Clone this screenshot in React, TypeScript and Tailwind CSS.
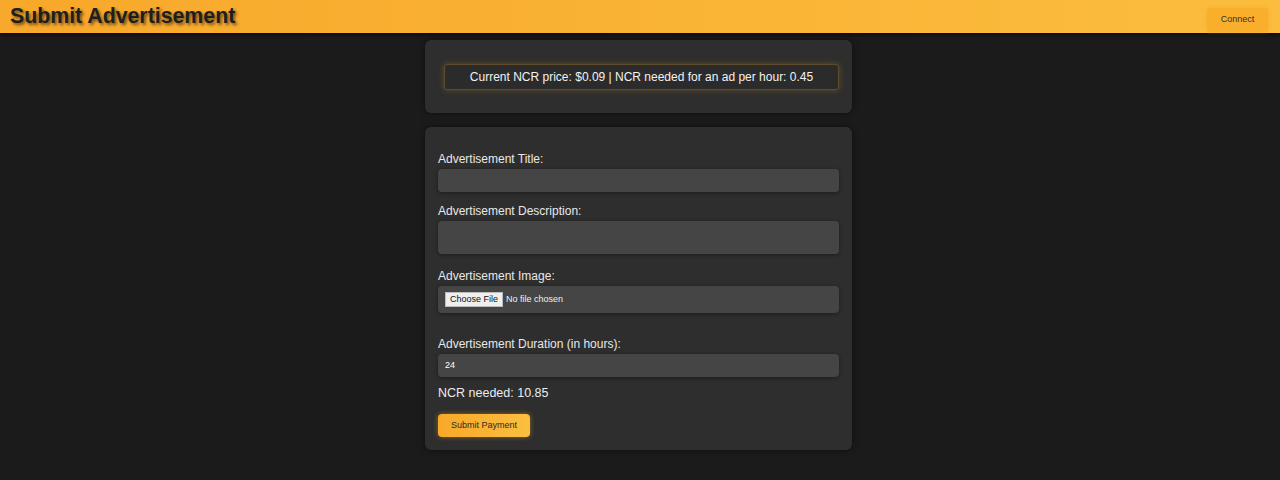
export default function App() {
  return (
    <div className="min-h-screen bg-[#1b1b1b] font-['Liberation_Sans',Arial,sans-serif] text-[#e8e8e8]">
      {/* header */}
      <header className="flex h-[33px] items-center justify-between bg-gradient-to-r from-[#f8a82a] to-[#fbbd3e] pl-[10px] pr-[12px] shadow-[0_2px_4px_rgba(0,0,0,0.6)]">
        <h1 className="text-[21.3px] font-bold leading-none text-[#1e1e1e] [text-shadow:2px_2px_3px_rgba(0,0,0,0.55)]">
          Submit Advertisement
        </h1>
        <button className="mt-[7px] h-[24px] w-[61px] rounded-[3px] bg-[#f9ae2c] text-[9px] text-[#333] shadow-[0_0_4px_rgba(240,150,20,0.4)]">
          Connect
        </button>
      </header>

      <main className="mx-auto flex w-[430px] flex-col gap-[14px] pr-[3px] pt-[7px]">
        <div className="rounded-[6px] bg-[#2e2e2e] pb-[23px] pl-[19px] pr-[13px] pt-[24px] shadow-[0_0_6px_rgba(0,0,0,0.5)]">
          <div className="flex h-[26px] items-center justify-center rounded-[3px] border border-[#5e4c2c] bg-[#2b2b2b] text-[12px] text-[#f2f2f2] shadow-[0_0_6px_rgba(200,140,40,0.35)]">
            Current NCR price: $0.09 | NCR needed for an ad per hour: 0.45
          </div>
        </div>

        <form className="flex flex-col rounded-[6px] bg-[#2e2e2e] px-[13px] pb-[13px] pt-[25px] shadow-[0_0_6px_rgba(0,0,0,0.5)]">
          <label className="text-[12px] leading-[14px] text-[#e8e8e8]">Advertisement Title:</label>
          <input
            type="text"
            className="mt-[3px] h-[23px] w-full rounded-[4px] bg-[#454545] px-[7px] text-[9px] text-white shadow-[0_1px_4px_rgba(0,0,0,0.4)] outline-none"
          />

          <label className="mt-[12px] text-[12px] leading-[14px] text-[#e8e8e8]">Advertisement Description:</label>
          <div className="mt-[3px] h-[33px] w-full rounded-[4px] bg-[#454545] shadow-[0_1px_4px_rgba(0,0,0,0.4)]" />

          <label className="mt-[15px] text-[12px] leading-[14px] text-[#e8e8e8]">Advertisement Image:</label>
          <div className="mt-[3px] flex h-[27px] w-full items-center gap-[3px] rounded-[4px] bg-[#454545] px-[7px] shadow-[0_1px_4px_rgba(0,0,0,0.4)]">
            <span className="flex h-[15px] items-center border border-[#bcbcbc] bg-[#efefef] px-[4px] text-[9px] text-[#111]">
              Choose File
            </span>
            <span className="text-[9px] text-[#f0f0f0]">No file chosen</span>
          </div>

          <label className="mt-[24px] text-[12px] leading-[14px] text-[#e8e8e8]">Advertisement Duration (in hours):</label>
          <div className="mt-[3px] flex h-[23px] w-full items-center rounded-[4px] bg-[#454545] px-[7px] text-[9px] text-white shadow-[0_1px_4px_rgba(0,0,0,0.4)]">
            24
          </div>

          <p className="mt-[8px] text-[12.5px] leading-[16px] text-[#ececec]">NCR needed: 10.85</p>

          <button
            type="button"
            className="mt-[13px] h-[23px] w-[92px] rounded-[4px] bg-gradient-to-r from-[#f8a828] to-[#fbbf40] text-[9px] text-[#2a2a2a] shadow-[0_0_5px_rgba(245,165,40,0.5)]"
          >
            Submit Payment
          </button>
        </form>
      </main>
    </div>
  );
}
